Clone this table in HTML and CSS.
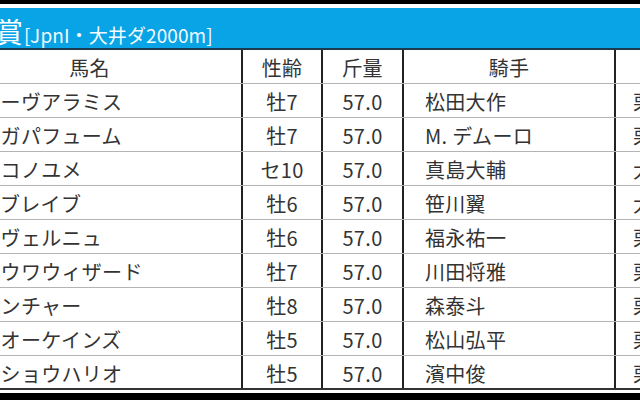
FILE: index.html
```html
<!DOCTYPE html>
<html lang="ja">
<head>
<meta charset="utf-8">
<link rel="stylesheet" href="styles.css">
</head>
<body>
<div class="frame">
  <div class="band-top"></div>
  <div class="sheet">
    <div class="title"><span class="race">帝王賞</span><span class="grade">[JpnI・大井ダ2000m]</span></div>
    <div class="table">
      <div class="row head">
        <div class="c name">馬名</div><div class="c mid">性齢</div><div class="c mid">斤量</div><div class="c jockey">騎手</div><div class="c aff">所属</div>
      </div>
      <div class="row"><div class="c name">スターヴアラミス</div><div class="c mid">牡7</div><div class="c mid">57.0</div><div class="c jockey">松田大作</div><div class="c aff">栗東</div></div>
      <div class="row"><div class="c name">オメガパフューム</div><div class="c mid">牡7</div><div class="c mid">57.0</div><div class="c jockey">M. デムーロ</div><div class="c aff">栗東</div></div>
      <div class="row"><div class="c name">ノンコノユメ</div><div class="c mid">セ10</div><div class="c mid">57.0</div><div class="c jockey">真島大輔</div><div class="c aff">大井</div></div>
      <div class="row"><div class="c name">ダノブレイブ</div><div class="c mid">牡6</div><div class="c mid">57.0</div><div class="c jockey">笹川翼</div><div class="c aff">大井</div></div>
      <div class="row"><div class="c name">ノーヴェルニュ</div><div class="c mid">牡6</div><div class="c mid">57.0</div><div class="c jockey">福永祐一</div><div class="c aff">栗東</div></div>
      <div class="row"><div class="c name">チュウワウィザード</div><div class="c mid">牡7</div><div class="c mid">57.0</div><div class="c jockey">川田将雅</div><div class="c aff">栗東</div></div>
      <div class="row"><div class="c name">クリンチャー</div><div class="c mid">牡8</div><div class="c mid">57.0</div><div class="c jockey">森泰斗</div><div class="c aff">栗東</div></div>
      <div class="row"><div class="c name">テーオーケインズ</div><div class="c mid">牡5</div><div class="c mid">57.0</div><div class="c jockey">松山弘平</div><div class="c aff">栗東</div></div>
      <div class="row last"><div class="c name">メイショウハリオ</div><div class="c mid">牡5</div><div class="c mid">57.0</div><div class="c jockey">濱中俊</div><div class="c aff">栗東</div></div>
    </div>
  </div>
  <div class="band-gap"></div>
  <div class="band-bottom"></div>
</div>
</body>
</html>
```
FILE: styles.css
```css
html, body {
  margin: 0;
  padding: 0;
  background: #ffffff;
}
body {
  width: 640px;
  height: 400px;
  overflow: hidden;
  font-family: "Noto Sans CJK JP", "Noto Sans", sans-serif;
  color: #333333;
}
.frame {
  width: 640px;
  height: 400px;
  overflow: hidden;
  display: flex;
  flex-direction: column;
}
.band-top {
  height: 4px;
  background: #000000;
  margin-bottom: 4px;
  flex: none;
}
.sheet {
  margin-left: -62px;
  width: 840px;
  flex: none;
}
.title {
  height: 42px;
  box-sizing: border-box;
  background: #08a4e6;
  border-bottom: 2px solid #1d3a4e;
  display: flex;
  align-items: baseline;
  padding-left: 1px;
  padding-top: 8px;
  color: #ffffff;
  white-space: nowrap;
}
.race {
  font-size: 28px;
  line-height: 30px;
}
.grade {
  font-size: 19px;
  line-height: 30px;
  margin-left: 1px;
  letter-spacing: 0.1px;
  color: #f2faff;
}
.row {
  display: grid;
  grid-template-columns: 305px 80px 81px 212px 162px;
  height: 34px;
  box-sizing: border-box;
  border-bottom: 1px solid #b4b4b4;
}
.row.last {
  border-bottom: 2px solid #333333;
}
.c {
  font-size: 20px;
  line-height: 30px;
  padding-top: 3px;
  white-space: nowrap;
  overflow: hidden;
  border-right: 2px solid #222222;
  letter-spacing: 0.3px;
}
.c.aff {
  border-right: none;
  padding-left: 17px;
}
.name {
  padding-left: 22px;
}
.mid {
  text-align: center;
}
.jockey {
  padding-left: 21px;
}
.head .c {
  text-align: center;
  padding-left: 0;
}
.band-gap {
  height: 3px;
  flex: none;
}
.band-bottom {
  flex: 1;
  background: #000000;
}
```
